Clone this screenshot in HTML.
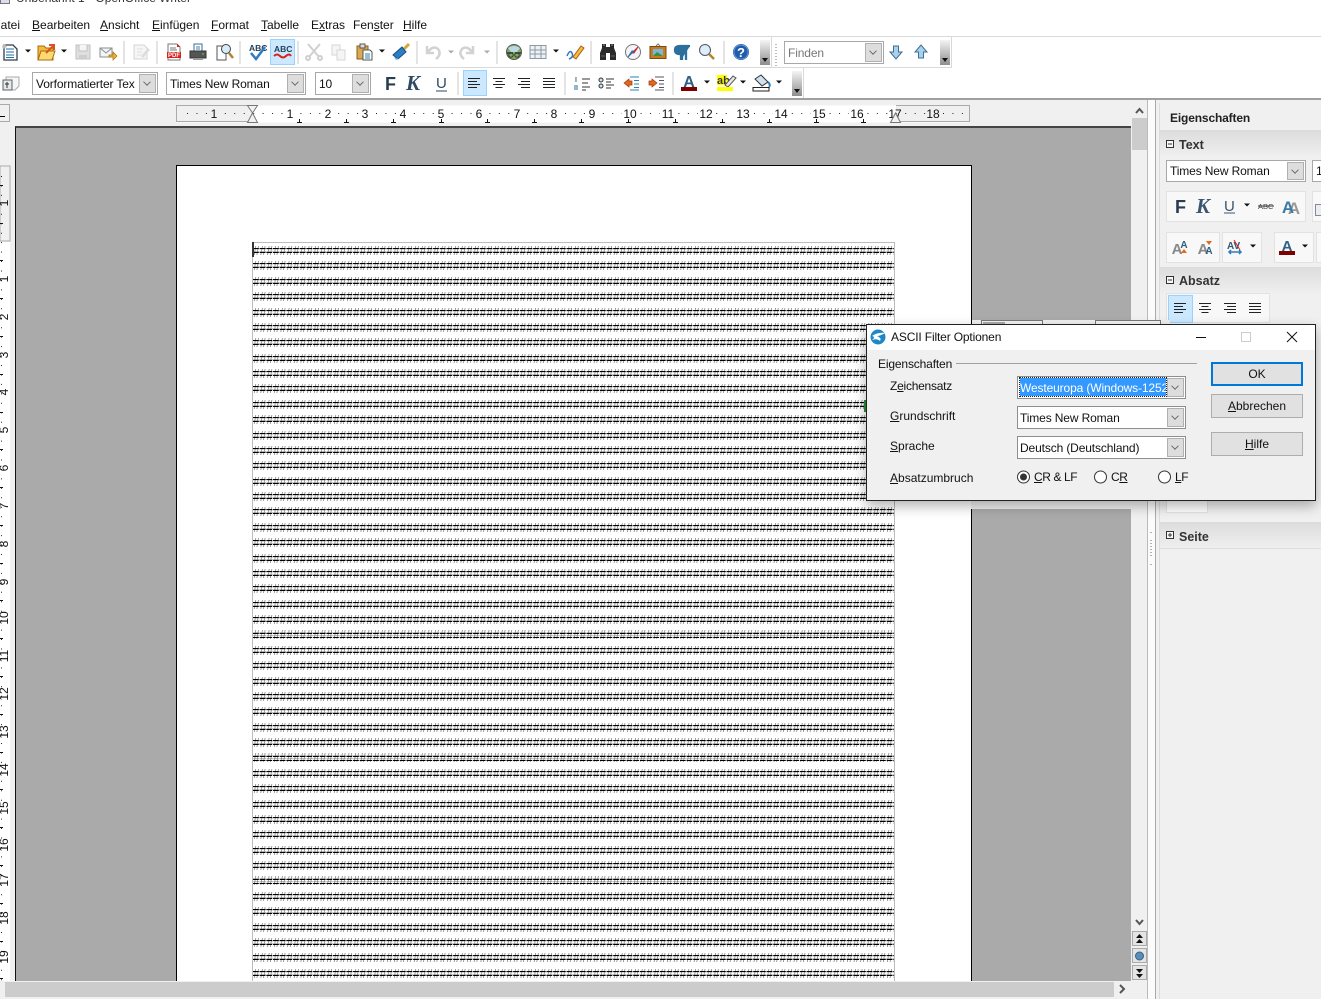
<!DOCTYPE html>
<html lang="de"><head><meta charset="utf-8"><title>Unbenannt 1 - OpenOffice Writer</title>
<style>
html,body{margin:0;padding:0;background:#fff}
#r{position:relative;width:1321px;height:999px;overflow:hidden;background:#fff;font:12px/16px "Liberation Sans",sans-serif;color:#111}
.a{position:absolute}
.t{position:absolute;white-space:nowrap}
u{text-decoration:underline;text-underline-offset:1px}
.cb{position:absolute;box-sizing:border-box;background:#fff;border:1px solid #a8a8a8;box-shadow:inset 0 0 0 1px #fff;white-space:nowrap;overflow:hidden;padding-left:3px;letter-spacing:-.13px}
.cb i{position:absolute;right:1px;top:1px;bottom:1px;width:17px;background:#ddd;border:1px solid #b0b0b0;box-sizing:border-box}
.cb i:after{content:"";position:absolute;left:4px;top:4px;width:5px;height:5px;border:solid #666;border-width:0 1px 1px 0;transform:rotate(45deg) scale(.9)}
.dc{border:1px solid #8e8e8e;box-shadow:none;padding-left:2px;line-height:22px;font-size:12px}
.btn{position:absolute;box-sizing:border-box;width:92px;height:24px;left:1211px;background:#e1e1e1;border:1px solid #adadad;text-align:center;line-height:22px}
.ov{position:absolute;width:10px;height:25px;background:linear-gradient(#f4f4f4,#8e8e8e)}
.ov:after{content:"";position:absolute;left:2px;bottom:3px;border:3px solid transparent;border-top:4px solid #111;border-bottom:0}
.sh{position:absolute;left:1160px;width:161px;height:26px;background:linear-gradient(#dcdcdc,#efefef);font-weight:bold;color:#333}
.bx{position:absolute;background:#f8f8f8;border:1px solid #e2e2e2;box-sizing:border-box}
.d{letter-spacing:-.15px}
#h{position:absolute;left:253px;top:243px;width:641px;height:738px;overflow:hidden;margin:0;font:13.33px/15.38px "Liberation Serif",serif;color:#777}
</style></head><body><div id="r">

<!-- title + menu -->
<div class="t" style="left:16px;top:-10px;color:#333">Unbenannt 1 - OpenOffice Writer</div>
<div class="a" style="left:0;top:0;width:10px;height:4px;border:1px solid #777;border-top:0;box-sizing:border-box;background:#dde"></div>
<div class="t" style="left:0;top:17px;width:20px;overflow:hidden;direction:rtl">atei</div>
<div class="t" style="left:32px;top:17px"><u>B</u>earbeiten</div>
<div class="t" style="left:100px;top:17px"><u>A</u>nsicht</div>
<div class="t" style="left:152px;top:17px"><u>E</u>infügen</div>
<div class="t" style="left:211px;top:17px"><u>F</u>ormat</div>
<div class="t" style="left:261px;top:17px"><u>T</u>abelle</div>
<div class="t" style="left:311px;top:17px">E<u>x</u>tras</div>
<div class="t" style="left:353px;top:17px">Fen<u>s</u>ter</div>
<div class="t" style="left:403px;top:17px"><u>H</u>ilfe</div>
<div class="a" style="left:0;top:36px;width:1321px;height:1px;background:#d9d9d9"></div>

<!-- toolbar frames -->
<div class="a" style="left:0;top:67px;width:952px;height:1px;background:#d9d9d9"></div>
<div class="a" style="left:771px;top:37px;width:1px;height:30px;background:#d9d9d9"></div>
<div class="a" style="left:951px;top:37px;width:1px;height:31px;background:#d9d9d9"></div>
<div class="a" style="left:803px;top:68px;width:1px;height:30px;background:#d9d9d9"></div>
<div class="a" style="left:0;top:98px;width:1321px;height:2px;background:#a0a0a0"></div>

<div class="a" style="left:270px;top:39px;width:25px;height:26px;box-sizing:border-box;background:#cce8ff;border:1px solid #99d1ff"></div>
<div class="a" style="left:463px;top:70px;width:24px;height:26px;box-sizing:border-box;background:#cce8ff;border:1px solid #99d1ff"></div>
<div class="ov" style="left:760px;top:40px"></div>
<div class="ov" style="left:940px;top:40px"></div>
<div class="ov" style="left:792px;top:71px"></div>

<div class="cb" style="left:784px;top:41px;width:100px;height:23px;line-height:23px;color:#777">Finden<i></i></div>
<div class="cb" style="left:32px;top:72px;width:126px;height:23px;line-height:23px">Vorformatierter Tex<i></i></div>
<div class="cb" style="left:166px;top:72px;width:140px;height:23px;line-height:23px">Times New Roman<i></i></div>
<div class="cb" style="left:315px;top:72px;width:56px;height:23px;line-height:23px">10<i></i></div>

<!-- work area -->
<div class="a" style="left:0;top:100px;width:1155px;height:899px;background:#f0f0f0"></div>
<div class="a" style="left:0;top:104px;width:10px;height:18px;box-sizing:border-box;border:1px solid #aaa;border-left:0;background:#f0f0f0"></div>
<div class="a" style="left:0;top:116px;width:5px;height:1px;background:#000"></div>
<div class="a" style="left:15px;top:126px;width:1116px;height:855px;background:#aaa;border-top:2px solid #444;border-left:1px solid #111;box-sizing:border-box"></div>
<div class="a" style="left:176px;top:165px;width:796px;height:816px;box-sizing:border-box;background:#fff;border:1px solid #000;border-bottom:0"></div>
<div class="a" style="left:252px;top:242px;width:643px;height:739px;box-sizing:border-box;border:1px solid #bbb;border-bottom:0"></div>
<pre id="h">####################################################################################################
####################################################################################################
####################################################################################################
####################################################################################################
####################################################################################################
####################################################################################################
####################################################################################################
####################################################################################################
####################################################################################################
####################################################################################################
####################################################################################################
####################################################################################################
####################################################################################################
####################################################################################################
####################################################################################################
####################################################################################################
####################################################################################################
####################################################################################################
####################################################################################################
####################################################################################################
####################################################################################################
####################################################################################################
####################################################################################################
####################################################################################################
####################################################################################################
####################################################################################################
####################################################################################################
####################################################################################################
####################################################################################################
####################################################################################################
####################################################################################################
####################################################################################################
####################################################################################################
####################################################################################################
####################################################################################################
####################################################################################################
####################################################################################################
####################################################################################################
####################################################################################################
####################################################################################################
####################################################################################################
####################################################################################################
####################################################################################################
####################################################################################################
####################################################################################################
####################################################################################################
####################################################################################################
####################################################################################################</pre>
<svg class="a" style="left:0;top:0" width="1321" height="981" viewBox="0 0 1321 981">
<defs><path id="hl" d="M253 248.500H894M253 252.500H894" stroke="#000" stroke-dasharray="5.800 .87" fill="none"/></defs>
<use href="#hl"/><use href="#hl" y="15"/><use href="#hl" y="31"/><use href="#hl" y="46"/><use href="#hl" y="62"/><use href="#hl" y="77"/><use href="#hl" y="92"/><use href="#hl" y="108"/><use href="#hl" y="123"/><use href="#hl" y="138"/><use href="#hl" y="154"/><use href="#hl" y="169"/><use href="#hl" y="185"/><use href="#hl" y="200"/><use href="#hl" y="215"/><use href="#hl" y="231"/><use href="#hl" y="246"/><use href="#hl" y="261"/><use href="#hl" y="277"/><use href="#hl" y="292"/><use href="#hl" y="308"/><use href="#hl" y="323"/><use href="#hl" y="338"/><use href="#hl" y="354"/><use href="#hl" y="369"/><use href="#hl" y="385"/><use href="#hl" y="400"/><use href="#hl" y="415"/><use href="#hl" y="431"/><use href="#hl" y="446"/><use href="#hl" y="461"/><use href="#hl" y="477"/><use href="#hl" y="492"/><use href="#hl" y="508"/><use href="#hl" y="523"/><use href="#hl" y="538"/><use href="#hl" y="554"/><use href="#hl" y="569"/><use href="#hl" y="584"/><use href="#hl" y="600"/><use href="#hl" y="615"/><use href="#hl" y="631"/><use href="#hl" y="646"/><use href="#hl" y="661"/><use href="#hl" y="677"/><use href="#hl" y="692"/><use href="#hl" y="707"/><use href="#hl" y="723"/>
</svg>
<div class="a" style="left:252px;top:242px;width:2px;height:15px;background:#333"></div>

<!-- scrollbars -->
<div class="a" style="left:1132px;top:100px;width:15px;height:881px;background:#f0f0f0"></div>
<div class="a" style="left:1132px;top:118px;width:15px;height:32px;background:#ccc"></div>
<div class="a" style="left:5px;top:982px;width:1109px;height:15px;background:#ccc"></div>
<div class="a" style="left:1131px;top:981px;width:16px;height:18px;background:#f0f0f0"></div>
<div class="a" style="left:1147px;top:100px;width:1px;height:899px;background:#bbb"></div>
<div class="a" style="left:1148px;top:100px;width:7px;height:899px;background:#fbfbfb"></div>
<div class="a" style="left:1155px;top:100px;width:1px;height:899px;background:#aaa"></div>

<!-- sidebar -->
<div class="a" style="left:1156px;top:100px;width:165px;height:899px;background:#f0f0f0"></div>
<div class="a" style="left:1159px;top:103px;width:162px;height:896px;border-left:1px solid #dcdcdc"></div>
<div class="t d" style="left:1170px;top:110px;font-weight:bold;color:#222">Eigenschaften</div>
<div class="sh" style="top:130px"><span class="t" style="left:19px;top:7px;font-size:12.5px">Text</span></div>
<div class="sh" style="top:267px"><span class="t" style="left:19px;top:6px;font-size:12.5px">Absatz</span></div>
<div class="sh" style="top:522px;border-bottom:1px solid #ddd"><span class="t" style="left:19px;top:7px;font-size:12.5px">Seite</span></div>
<div class="cb" style="left:1166px;top:160px;width:140px;height:22px;line-height:21px">Times New Roman<i></i></div>
<div class="cb" style="left:1312px;top:160px;width:20px;height:22px;line-height:21px">1</div>
<div class="bx" style="left:1166px;top:191px;width:140px;height:31px"></div>
<div class="bx" style="left:1312px;top:191px;width:20px;height:31px"></div>
<div class="bx" style="left:1166px;top:232px;width:54px;height:31px"></div>
<div class="bx" style="left:1222px;top:232px;width:40px;height:31px"></div>
<div class="bx" style="left:1274px;top:232px;width:40px;height:31px"></div>
<div class="bx" style="left:1316px;top:232px;width:20px;height:31px"></div>
<div class="bx" style="left:1166px;top:293px;width:104px;height:30px"></div>
<div class="a" style="left:1168px;top:295px;width:25px;height:28px;box-sizing:border-box;background:#cce8ff;border:1px solid #99d1ff"></div>
<div class="bx" style="left:1166px;top:495px;width:42px;height:18px;background:#fff"></div>

<!-- all icons and ruler graphics -->
<svg class="a" style="left:0;top:0" width="1321" height="999" viewBox="0 0 1321 999" font-family="Liberation Sans, sans-serif">
<defs>
<g id="al"><path d="M-6-4.500H6M-6-1.500H3M-6 1.500H6M-6 4.500H3" stroke="#222" fill="none"/></g>
<g id="ac"><path d="M-6-4.500H6M-3.500-1.500H3.500M-6 1.500H6M-3.500 4.500H3.500" stroke="#222" fill="none"/></g>
<g id="ar"><path d="M-6-4.500H6M-3-1.500H6M-6 1.500H6M-3 4.500H6" stroke="#222" fill="none"/></g>
<g id="aj"><path d="M-6-4.500H6M-6-1.500H6M-6 1.500H6M-6 4.500H6" stroke="#222" fill="none"/></g>
<path id="dn" d="M-3-1.500H3L0 1.500Z" fill="#111"/>
<path id="dg" d="M-3-1.500H3L0 1.500Z" fill="#aaa"/>
<path id="sp" d="M0-11V12" stroke="#c8c8c8" fill="none"/>
</defs>

<g transform="translate(0,52)"><use href="#sp" x="124"/><use href="#sp" x="157"/><use href="#sp" x="240"/><use href="#sp" x="298"/><use href="#sp" x="417"/><use href="#sp" x="497"/><use href="#sp" x="591"/><use href="#sp" x="724"/></g>
<g transform="translate(0,83)"><use href="#sp" x="458"/><use href="#sp" x="565"/><use href="#sp" x="673"/></g>
<path d="M776 44V66" stroke="#777" stroke-dasharray="1 2"/>

<!-- new doc -->
<g transform="translate(10,52)"><path d="M-6-7H3L7-3V8H-6Z" fill="#fff" stroke="#2c3e4e" stroke-width="1.300"/><path d="M-4-3H4M-4 0H4M-4 3H4M-4 5.500H4" stroke="#1f6ea5"/><path d="M-8-6L-5-8-3-5-7-3Z" fill="#bbb"/></g>
<use href="#dn" x="28" y="51"/>
<!-- open -->
<g transform="translate(46,52)"><path d="M-8-6H-2L0-4H7V8H-8Z" fill="#f5b93c" stroke="#a66d10"/><path d="M-8 8L-5-1H9L6 8Z" fill="#fdd971" stroke="#a66d10"/><path d="M0 1L7-6M3-7H8V-2" stroke="#d9541e" stroke-width="2" fill="none"/></g>
<use href="#dn" x="64" y="51"/>
<!-- save -->
<g transform="translate(83,52)" opacity=".9"><path d="M-7-7H7V7H-7Z" fill="#dcdcdc" stroke="#bbb"/><path d="M-4-7V-1H4V-7" fill="#f4f4f4" stroke="#bbb"/><path d="M-4 3H4V7H-4Z" fill="#c8c8c8"/></g>
<!-- mail -->
<g transform="translate(107,52)"><path d="M-7-4H5V5H-7Z" fill="#f4f4f4" stroke="#8a8f96"/><path d="M-7-4L-1 1 5-4" fill="none" stroke="#8a8f96"/><path d="M2 3H6V0L10 4 6 8V5H2Z" fill="#f2b233" stroke="#a66d10" stroke-width=".7"/></g>
<!-- edit file -->
<g transform="translate(141,52)"><path d="M-7-7H3L6-4V7H-7Z" fill="#f6f6f6" stroke="#d4d4d4"/><path d="M-4-3H2M-4 0H1M-4 3H0" stroke="#ddd"/><path d="M0 4L7-4 9-2 2 6Z" fill="#ddd"/></g>
<!-- pdf -->
<g transform="translate(174,52)"><path d="M-6-8H3L6-5V8H-6Z" fill="#fff" stroke="#777"/><path d="M-4-4H2M-4-2H3" stroke="#777"/><path d="M-7 0H7V6H-7Z" fill="#d8201c"/><text x="-6" y="5" font-size="6" font-weight="bold" fill="#fff">PDF</text><path d="M3-8L6-5H3Z" fill="#d8201c"/></g>
<!-- print -->
<g transform="translate(198,52)"><path d="M-4-8H4V-1H-4Z" fill="#fff" stroke="#3d6e96"/><path d="M-2-5H2M-2-3H2" stroke="#3d85b5"/><path d="M-8-1H8V6H-8Z" fill="#555" stroke="#333"/><path d="M-5 6H5V8H-5Z" fill="#999"/><path d="M4 2H6" stroke="#5fd35f"/></g>
<!-- preview -->
<g transform="translate(224,52)"><path d="M-7-6H1L2-3V8H-7Z" fill="#fff" stroke="#555"/><circle cx="2" cy="-3" r="4.500" fill="#d5ecfa" stroke="#444"/><path d="M5 1L9 6" stroke="#b3832a" stroke-width="2.500"/></g>
<!-- spell -->
<text x="249" y="51" font-size="8.500" font-weight="bold" fill="#24405c">ABC</text>
<path d="M251 53L256 59 265 47" stroke="#2b7cc0" stroke-width="2.500" fill="none"/>
<!-- autospell -->
<text x="274" y="52" font-size="8.500" font-weight="bold" fill="#24405c">ABC</text>
<path d="M274 56Q277 53 280 56T286 56T291 56" stroke="#d8201c" stroke-width="2" fill="none"/>
<!-- cut -->
<g transform="translate(314,52)" stroke="#d0d0d0" stroke-width="2" fill="none"><path d="M-6-8L5 5M6-8L-5 5"/><circle cx="-6" cy="6" r="2"/><circle cx="6" cy="6" r="2"/></g>
<!-- copy -->
<g transform="translate(339,52)" fill="#f5f5f5" stroke="#d6d6d6"><path d="M-7-7H1V3H-7Z"/><path d="M-2-2H6V8H-2Z"/></g>
<!-- paste -->
<g transform="translate(364,52)"><path d="M-7-6H4V7H-7Z" fill="#d9a954" stroke="#8a5d18"/><path d="M-4-8H1V-4H-4Z" fill="#ddd" stroke="#555"/><path d="M-1-2H6L8 0V8H-1Z" fill="#fff" stroke="#555"/><path d="M1 2H6M1 4H6M1 6H6" stroke="#2f7fb5"/></g>
<use href="#dn" x="382" y="51"/>
<!-- brush -->
<g transform="translate(401,52)"><path d="M3-3L8-8" stroke="#d9a53a" stroke-width="3"/><path d="M-8 3L1-5 5 0-3 7Z" fill="#2c7fc4" stroke="#174f80"/><path d="M-7 5L-2 7-5 8Z" fill="#6db3e8"/></g>
<!-- undo redo -->
<path d="M427 46V53H434M428 52Q433 45 438 49 442 54 436 59" fill="none" stroke="#d2d2d2" stroke-width="2.500"/>
<use href="#dg" x="451" y="52"/>
<path d="M473 46V53H466M472 52Q467 45 462 49 458 54 464 59" fill="none" stroke="#d2d2d2" stroke-width="2.500"/>
<use href="#dg" x="487" y="52"/>
<!-- nav globe -->
<g transform="translate(514,52)"><circle r="7.500" fill="#7fae5a" stroke="#555"/><path d="M-6-4Q0-8 6-4L3 0H-3Z" fill="#bcd7e8"/><path d="M-7 1H-1M1 1H7" stroke="#333" stroke-width="1.500"/><circle cx="-3" cy="3" r="2.200" fill="none" stroke="#333"/><circle cx="3" cy="3" r="2.200" fill="none" stroke="#333"/></g>
<!-- table -->
<g transform="translate(538,52)" fill="none" stroke="#8c9aa5"><path d="M-8-6.500H8V6.500H-8ZM-8-2H8M-8 2H8M-3-6.500V6.500M3-6.500V6.500" fill="#eef2f5"/></g>
<use href="#dn" x="556" y="51"/>
<!-- draw -->
<g transform="translate(575,52)"><path d="M-8 4Q-5-3-3 1T-6 7" fill="none" stroke="#2b7cc0" stroke-width="1.500"/><path d="M-2 5L6-6 9-4 1 7Z" fill="#f2c12e" stroke="#b3552a"/></g>
<!-- binoculars -->
<g transform="translate(608,52)"><path d="M-6-8H-2V-5H2V-8H6V-4L8 1V8H2V1H-2V8H-8V1L-6-4Z" fill="#2b2b2b"/><path d="M-5-7H-3M3-7H5" stroke="#888"/><path d="M-7 4H-3M3 4H7" stroke="#666"/></g>
<!-- compass -->
<g transform="translate(633,52)"><circle r="7.500" fill="#f4f4f4" stroke="#777"/><path d="M5-5L-1 1 1 1Z" fill="#d8201c" stroke="#d8201c"/><path d="M-5 5L1-1-1-1Z" fill="#2b6cb5" stroke="#2b6cb5"/></g>
<!-- gallery -->
<g transform="translate(658,52)"><path d="M-8-5.500H8V6.500H-8Z" fill="#c97c1d" stroke="#7a4a10"/><path d="M-5-3H5V4H-5Z" fill="#7bb6dc"/><path d="M-5 4L-1 0 5 4Z" fill="#3c8f3c"/><path d="M-2-6L0-8 2-6" fill="none" stroke="#777"/></g>
<!-- para -->
<path d="M690 46H680Q675 46 675 50T680 54H681V60M682 54V60M686 46V60" stroke="#2c6f9c" stroke-width="2.300" fill="#2c6f9c"/>
<!-- zoom -->
<g transform="translate(706,51)"><circle cx="-1" cy="-1" r="5.500" fill="#dbeefa" stroke="#556"/><path d="M3 3L8 8" stroke="#b3832a" stroke-width="2.500"/></g>
<!-- help -->
<circle cx="741" cy="52" r="8" fill="#1f5cab"/><circle cx="741" cy="52" r="7" fill="none" stroke="#7ba7dc" stroke-width=".7"/>
<text x="741" y="57" font-size="13" font-weight="bold" fill="#fff" text-anchor="middle">?</text>
<!-- find arrows -->
<path d="M893.500 46H898.500V52H902L896 59 890 52H893.500Z" fill="#a9d0ec" stroke="#3d6e96"/>
<path d="M918.500 58H923.500V52H927L921 45 915 52H918.500Z" fill="#a9d0ec" stroke="#3d6e96"/>

<!-- tb2 left icon -->
<g transform="translate(10,83)"><path d="M-4-6H9V3L5 7H-4Z" fill="#f6f6f6" stroke="#aaa"/><path d="M-7-3H2V7H-7Z" fill="#e8e8e8" stroke="#566"/><path d="M-3-1V5M-5 1H-1" stroke="#333"/></g>
<!-- F K U -->
<text x="385" y="90" font-size="18" font-weight="bold" fill="#2a3d50">F</text>
<text x="406" y="90" font-size="21" font-weight="bold" font-style="italic" font-family="Liberation Serif, serif" fill="#2f4a62">K</text>
<text x="436" y="88" font-size="15" fill="#2f4a62">U</text><path d="M436 91H447" stroke="#2f4a62"/>
<use href="#al" x="474" y="83"/><use href="#ac" x="499" y="83"/><use href="#ar" x="524" y="83"/><use href="#aj" x="549" y="83"/>
<!-- num list -->
<text x="575" y="82" font-size="7" font-weight="bold" fill="#2c6f9c">I</text><text x="574" y="90" font-size="7" font-weight="bold" fill="#2c6f9c">II</text>
<path d="M582 79H590M582 83H588M582 87H590M582 90H586" stroke="#333"/>
<circle cx="601" cy="80" r="2" fill="#cfe2f0" stroke="#333"/><circle cx="601" cy="86" r="2" fill="#cfe2f0" stroke="#333"/><path d="M606 79H614M606 82H611M606 85H614M606 88H611" stroke="#333"/>
<!-- indent -->
<g transform="translate(632,83)"><path d="M-8 0L-3-4V-2H0V2H-3V4Z" fill="#e06a1a" stroke="#a8350c" stroke-width=".7"/><path d="M-2-6H7M2-2.500H7M2 1H7M2 4.500H7M-2 7H7" stroke="#2c7fb5"/></g>
<g transform="translate(657,83)"><path d="M0 0L-5-4V-2H-8V2H-5V4Z" fill="#e06a1a" stroke="#a8350c" stroke-width=".7"/><path d="M-2-6H7M2-2.500H7M2 1H7M2 4.500H7M-2 7H7" stroke="#556"/></g>
<!-- font colour -->
<text x="689" y="87" font-size="16" font-weight="bold" fill="#2f5f85" text-anchor="middle">A</text><path d="M681 87H697V91H681Z" fill="#800000"/>
<use href="#dn" x="707" y="82"/>
<!-- highlight -->
<path d="M717 75H727V85H717Z" fill="#ff0"/><text x="717" y="84" font-size="11" font-weight="bold" fill="#333">ab</text><path d="M725 85L733 76 736 78 728 87Z" fill="#e8e8e8" stroke="#555"/><path d="M717 87H733V91H717Z" fill="#ff0"/>
<use href="#dn" x="743" y="82"/>
<!-- bg colour -->
<path d="M755 79L761 75 768 82 762 86Z" fill="#cfe2f0" stroke="#333"/><path d="M768 82Q771 85 769 87" stroke="#2c7fb5" stroke-width="2" fill="none"/><path d="M753 87.500H769V91H753Z" fill="#fff" stroke="#222"/>
<use href="#dn" x="779" y="82"/>

<!-- ruler -->
<rect x="176.500" y="105.500" width="793" height="17" fill="#fff" stroke="none"/>
<path d="M252 105.500H176.500V121.500H252" fill="#f0f0f0" stroke="#aaa"/>
<path d="M896 105.500H969.500V121.500H896" fill="#f0f0f0" stroke="#aaa"/>
<path d="M186 113.500H970" stroke="#222" stroke-dasharray="1 8.450" stroke-dashoffset="-1" fill="none"/>
<g font-size="12" fill="#111" text-anchor="middle">
<rect x="208" y="106" width="12" height="15" fill="#f0f0f0"/><text x="214" y="118">1</text>
<g fill="#fff"><rect x="283" y="106" width="13" height="15"/><rect x="321" y="106" width="13" height="15"/><rect x="359" y="106" width="13" height="15"/><rect x="397" y="106" width="13" height="15"/><rect x="435" y="106" width="13" height="15"/><rect x="473" y="106" width="13" height="15"/><rect x="510" y="106" width="13" height="15"/><rect x="548" y="106" width="13" height="15"/><rect x="586" y="106" width="13" height="15"/><rect x="622" y="106" width="17" height="15"/><rect x="660" y="106" width="17" height="15"/><rect x="698" y="106" width="17" height="15"/><rect x="735" y="106" width="17" height="15"/><rect x="773" y="106" width="17" height="15"/><rect x="811" y="106" width="17" height="15"/><rect x="849" y="106" width="17" height="15"/></g>
<rect x="926" y="106" width="15" height="15" fill="#f0f0f0"/>
<text x="290" y="118">1</text><text x="328" y="118">2</text><text x="365" y="118">3</text><text x="403" y="118">4</text><text x="441" y="118">5</text><text x="479" y="118">6</text><text x="517" y="118">7</text><text x="554" y="118">8</text><text x="592" y="118">9</text><text x="630" y="118">10</text><text x="668" y="118">11</text><text x="706" y="118">12</text><text x="743" y="118">13</text><text x="781" y="118">14</text><text x="819" y="118">15</text><text x="857" y="118">16</text><text x="895" y="118">17</text><text x="933" y="118">18</text></g>
<path d="M299.500 119V122.500M297 122.500H302M346.500 119V122.500M344 122.500H349M393.500 119V122.500M391 122.500H396M441.500 119V122.500M439 122.500H444M487.500 119V122.500M485 122.500H490M534.500 119V122.500M532 122.500H537M581.500 119V122.500M579 122.500H584M628.500 119V122.500M626 122.500H631M675.500 119V122.500M673 122.500H678M722.500 119V122.500M720 122.500H725M769.500 119V122.500M767 122.500H772M816.500 119V122.500M814 122.500H819M863.500 119V122.500M861 122.500H866" stroke="#111" fill="none"/>
<path d="M247.500 105.500H257.500L252.500 113 257.500 122.500H247.500L252.500 113Z" fill="#f2f2f2" stroke="#777"/>
<path d="M890.500 122.500H900.500L895.500 113Z" fill="#f2f2f2" stroke="#777"/>

<!-- vertical ruler -->
<rect x="0" y="166" width="10" height="75" fill="#f0f0f0" stroke="#aaa"/>
<rect x="0" y="242" width="10" height="739" fill="#fff"/>
<path d="M1.500 176V981" stroke="#222" stroke-dasharray="1 8.450" fill="none"/>
<path d="M0 185.500H3M0 223.500H3M0 260.500H3M0 298.500H3M0 336.500H3M0 374.500H3M0 412.500H3M0 449.500H3M0 487.500H3M0 525.500H3M0 563.500H3M0 600.500H3M0 638.500H3M0 676.500H3M0 714.500H3M0 752.500H3M0 789.500H3M0 827.500H3M0 865.500H3M0 903.500H3M0 941.500H3M0 978.500H3" stroke="#111" fill="none"/>
<svg x="0" y="160" width="10" height="821" viewBox="0 160 10 821" overflow="hidden"><g font-size="12" fill="#111" text-anchor="middle">
<text transform="translate(8,203) rotate(-90)">1</text><text transform="translate(8,279) rotate(-90)">1</text><text transform="translate(8,317) rotate(-90)">2</text><text transform="translate(8,355) rotate(-90)">3</text><text transform="translate(8,392) rotate(-90)">4</text><text transform="translate(8,430) rotate(-90)">5</text><text transform="translate(8,468) rotate(-90)">6</text><text transform="translate(8,506) rotate(-90)">7</text><text transform="translate(8,544) rotate(-90)">8</text><text transform="translate(8,582) rotate(-90)">9</text><text transform="translate(8,618) rotate(-90)">10</text><text transform="translate(8,656) rotate(-90)">11</text><text transform="translate(8,694) rotate(-90)">12</text><text transform="translate(8,732) rotate(-90)">13</text><text transform="translate(8,770) rotate(-90)">14</text><text transform="translate(8,808) rotate(-90)">15</text><text transform="translate(8,845) rotate(-90)">16</text><text transform="translate(8,880) rotate(-90)">17</text><text transform="translate(8,918) rotate(-90)">18</text><text transform="translate(8,957) rotate(-90)">19</text></g></svg>

<!-- scrollbar arrows -->
<path d="M1136 113L1139.500 109 1143 113" fill="none" stroke="#555" stroke-width="2"/>
<path d="M1136 920L1139.500 924 1143 920" fill="none" stroke="#555" stroke-width="2"/>
<path d="M1120 985L1124 989 1120 993" fill="none" stroke="#555" stroke-width="2"/>
<g fill="#e4e4e4" stroke="#aaa"><rect x="1132.500" y="931.500" width="14" height="14"/><rect x="1132.500" y="948.500" width="14" height="14"/><rect x="1132.500" y="965.500" width="14" height="14"/></g>
<path d="M1136 938L1139.500 934 1143 938ZM1136 943L1139.500 939 1143 943ZM1136 969H1143L1139.500 973ZM1136 974H1143L1139.500 978Z" fill="#111"/>
<circle cx="1139.500" cy="956" r="4" fill="#5a8db8" stroke="#36628a"/>
<!-- sash dots -->
<path d="M1151 532V534M1151 540V558M1151 564V566" stroke="#666" stroke-dasharray="1 2"/>

<!-- sidebar icons -->
<g fill="#f7f7f7" stroke="#333"><rect x="1166.500" y="140.500" width="7" height="7"/><rect x="1166.500" y="276.500" width="7" height="7"/><rect x="1166.500" y="531.500" width="7" height="7"/></g>
<path d="M1168 144H1172M1168 280H1172M1168 535H1172M1170 533V537" stroke="#333" fill="none"/>
<text x="1175" y="213" font-size="18" font-weight="bold" fill="#2a3d50">F</text>
<text x="1196" y="213" font-size="21" font-weight="bold" font-style="italic" font-family="Liberation Serif, serif" fill="#3a556e">K</text>
<text x="1224" y="211" font-size="15" fill="#3a556e">U</text><path d="M1224 213H1235" stroke="#3a556e"/>
<use href="#dn" x="1247" y="205"/>
<text x="1258" y="209" font-size="7.500" fill="#444">ABC</text><path d="M1258 206H1274" stroke="#333"/>
<text x="1294" y="214" font-size="17" font-weight="bold" fill="#999" text-anchor="middle">A</text><text x="1288" y="213" font-size="17" font-weight="bold" fill="#3d7ba6" text-anchor="middle">A</text>
<text x="1177" y="254" font-size="15" font-weight="bold" fill="#888" text-anchor="middle">A</text><text x="1184" y="248" font-size="10" font-weight="bold" fill="#2f5f85" text-anchor="middle">A</text><path d="M1181 253H1187L1184 249Z" fill="#e06a1a"/>
<text x="1203" y="254" font-size="15" font-weight="bold" fill="#888" text-anchor="middle">A</text><text x="1209" y="254" font-size="10" font-weight="bold" fill="#2f5f85" text-anchor="middle">A</text><path d="M1206 241H1212L1209 245Z" fill="#e06a1a"/>
<text x="1227" y="249" font-size="10" font-weight="bold" fill="#3a556e">AV</text><path d="M1234 240L1240 250" stroke="#d8201c"/><path d="M1229 252H1241M1231 250L1229 252 1231 254M1239 250L1241 252 1239 254" stroke="#2b7cc0" stroke-width="1.500" fill="none"/>
<use href="#dn" x="1253" y="246"/>
<text x="1287" y="251" font-size="15" font-weight="bold" fill="#2f5f85" text-anchor="middle">A</text><path d="M1279 251H1295V255H1279Z" fill="#800000"/>
<use href="#dn" x="1305" y="246"/>
<use href="#al" x="1180" y="308"/><use href="#ac" x="1205" y="308"/><use href="#ar" x="1230" y="308"/><use href="#aj" x="1255" y="308"/>
<path d="M1315.500 204.500H1325V215.500H1315.500Z" fill="#e8eef2" stroke="#889"/>
</svg>

<!-- ghost strips around the dialog -->
<div class="a" style="left:972px;top:320px;width:198px;height:4px;background:#f0f0f0"></div>
<div class="a" style="left:971px;top:501px;width:160px;height:8px;background:#f0f0f0"></div>
<div class="a" style="left:981px;top:320px;width:62px;height:6px;box-sizing:border-box;background:#f4f4f4;border:1px solid #777"></div>
<div class="a" style="left:983px;top:322px;width:22px;height:2px;background:#aaa"></div>
<div class="a" style="left:1095px;top:320px;width:66px;height:6px;box-sizing:border-box;background:#f4f4f4;border:1px solid #777"></div>
<div class="a" style="left:864px;top:400px;width:2px;height:12px;background:#2a8a3a"></div>

<!-- dialog -->
<div class="a" style="left:866px;top:324px;width:450px;height:177px;box-sizing:border-box;background:#f0f0f0;border:1px solid #222;box-shadow:0 5px 12px rgba(0,0,0,.3)">
<div class="a" style="left:0;top:0;width:448px;height:25px;background:#fff"></div>
</div>
<svg class="a" style="left:866px;top:324px" width="450" height="40" viewBox="866 324 450 40">
<circle cx="878" cy="337" r="7.500" fill="#1f86c7"/><path d="M872 336Q878 332 885 333 880 336 877 336 882 338 880 341 877 338 872 340 876 337 872 336Z" fill="#fff"/>
<path d="M1196 337.500H1206" stroke="#111"/>
<rect x="1241.500" y="332.500" width="9" height="9" fill="none" stroke="#ccc"/>
<path d="M1287 332L1297 342M1297 332L1287 342" stroke="#111" fill="none"/>
</svg>
<div class="t d" style="left:891px;top:329px">ASCII Filter Optionen</div>
<div class="t d" style="left:878px;top:356px">Eigenschaften</div>
<div class="a" style="left:956px;top:363px;width:241px;height:1px;background:#a0a0a0"></div>
<div class="t" style="left:890px;top:378px;letter-spacing:-.25px">Z<u>e</u>ichensatz</div>
<div class="t" style="left:890px;top:408px"><u>G</u>rundschrift</div>
<div class="t" style="left:890px;top:438px"><u>S</u>prache</div>
<div class="t" style="left:890px;top:470px"><u>A</u>bsatzumbruch</div>
<div class="cb dc" style="left:1017px;top:376px;width:169px;height:23px"><span style="background:#3399ff;color:#fff;display:inline-block;width:146px;height:18px;line-height:20px;margin-top:1px;overflow:hidden;vertical-align:top;outline:1px dotted #222">Westeuropa (Windows-1252)</span><i></i></div>
<div class="cb dc" style="left:1017px;top:406px;width:169px;height:23px">Times New Roman<i></i></div>
<div class="cb dc" style="left:1017px;top:436px;width:169px;height:23px">Deutsch (Deutschland)<i></i></div>
<div class="btn" style="top:362px;border:2px solid #0078d7;line-height:20px">OK</div>
<div class="btn" style="top:394px"><u>A</u>bbrechen</div>
<div class="btn" style="top:432px"><u>H</u>ilfe</div>
<svg class="a" style="left:1010px;top:465px" width="170" height="24" viewBox="1010 465 170 24">
<g fill="#fff" stroke="#333"><circle cx="1023.500" cy="477" r="6"/><circle cx="1100.500" cy="477" r="6"/><circle cx="1164.500" cy="477" r="6"/></g>
<circle cx="1023.500" cy="477" r="3.500" fill="#333"/>
</svg>
<div class="t" style="left:1034px;top:469px;letter-spacing:-.4px"><u>C</u>R &amp; LF</div>
<div class="t" style="left:1111px;top:469px;letter-spacing:-.4px">C<u>R</u></div>
<div class="t" style="left:1175px;top:469px;letter-spacing:-.4px"><u>L</u>F</div>

</div></body></html>
